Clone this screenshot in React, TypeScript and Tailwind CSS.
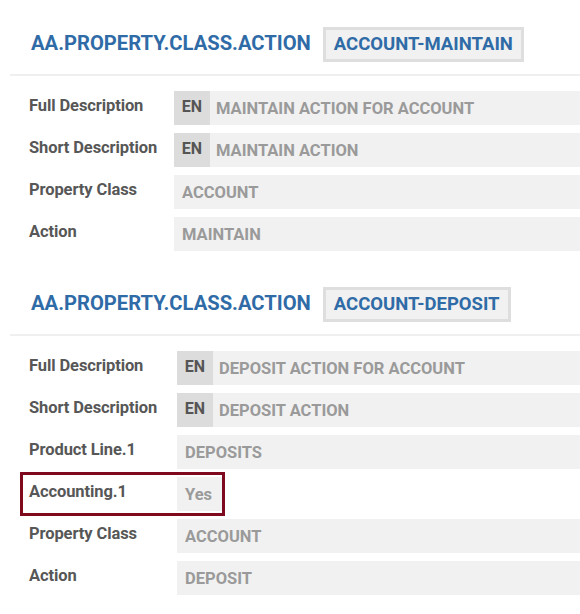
import React from 'react';

type Row = {
  label: string;
  value: string;
  lang?: boolean;
  short?: boolean;
  highlight?: boolean;
};

type Section = {
  title: string;
  badge: string;
  labelWidth: string;
  rows: Row[];
};

const sections: Section[] = [
  {
    title: 'AA.PROPERTY.CLASS.ACTION',
    badge: 'ACCOUNT-MAINTAIN',
    labelWidth: 'w-[164px]',
    rows: [
      { label: 'Full Description', value: 'MAINTAIN ACTION FOR ACCOUNT', lang: true },
      { label: 'Short Description', value: 'MAINTAIN ACTION', lang: true },
      { label: 'Property Class', value: 'ACCOUNT' },
      { label: 'Action', value: 'MAINTAIN' },
    ],
  },
  {
    title: 'AA.PROPERTY.CLASS.ACTION',
    badge: 'ACCOUNT-DEPOSIT',
    labelWidth: 'w-[167px]',
    rows: [
      { label: 'Full Description', value: 'DEPOSIT ACTION FOR ACCOUNT', lang: true },
      { label: 'Short Description', value: 'DEPOSIT ACTION', lang: true },
      { label: 'Product Line.1', value: 'DEPOSITS' },
      { label: 'Accounting.1', value: 'Yes', short: true, highlight: true },
      { label: 'Property Class', value: 'ACCOUNT' },
      { label: 'Action', value: 'DEPOSIT' },
    ],
  },
];

function FieldRow({ row, labelWidth }: { row: Row; labelWidth: string }) {
  return (
    <div className="relative flex">
      <div
        className={`${labelWidth} shrink-0 whitespace-nowrap pl-[19px] pt-[3px] text-[16.5px] font-bold tracking-[-0.1px] text-[#575757]`}
      >
        {row.label}
      </div>
      <div className={`flex h-[34px] bg-[#f1f1f1] ${row.short ? 'w-[46px]' : 'flex-1'}`}>
        {row.lang && (
          <div className="flex w-[36px] shrink-0 items-center justify-center bg-[#dcdcdc] pb-[3px] text-[16px] font-bold text-[#555]">
            EN
          </div>
        )}
        <div
          className={`flex items-center whitespace-nowrap pt-[2px] text-[16.5px] font-bold text-[#9a9a9a] ${
            row.lang ? 'pl-[6px]' : 'pl-[8px]'
          }`}
        >
          {row.value}
        </div>
      </div>
      {row.highlight && (
        <div className="absolute left-[10px] top-[-5px] h-[44px] w-[205px] border-[3px] border-[#7f0a1e]" />
      )}
    </div>
  );
}

export default function App() {
  return (
    <div
      className="min-h-[614px] w-[580px] overflow-hidden bg-white pl-[10px] pt-[27px]"
      style={{ fontFamily: 'Roboto, "Liberation Sans", sans-serif' }}
    >
      {sections.map((section, i) => (
        <div key={i} className={i > 0 ? 'mt-[36px]' : ''}>
          {/* Header */}
          <div className="flex h-[35px] items-center gap-[12px] pl-[21px]">
            <div className="pb-[3px] text-[20.2px] font-bold text-[#2f6ba6]">{section.title}</div>
            <div className="flex h-[35px] items-center border-[3px] border-[#dedede] bg-[#f1f1f1] px-[8px] text-[18.5px] font-bold text-[#2f6ba6]">
              {section.badge}
            </div>
          </div>
          <div className="mt-[12px] h-[2px] bg-[#efefef]" />

          {/* Fields */}
          <div className="mt-[15px] flex flex-col gap-[8px]">
            {section.rows.map((row) => (
              <FieldRow key={row.label} row={row} labelWidth={section.labelWidth} />
            ))}
          </div>
        </div>
      ))}
    </div>
  );
}
